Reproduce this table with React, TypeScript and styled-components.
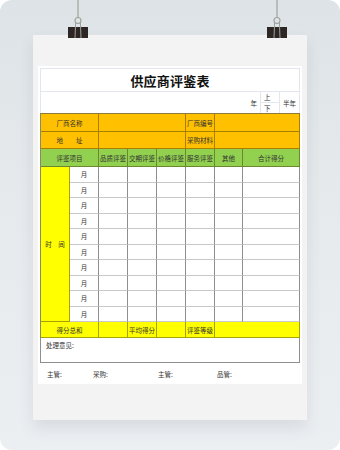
import React from "react";
import styled, { createGlobalStyle } from "styled-components";

const Global = createGlobalStyle`
  html, body { margin: 0; padding: 0; background: #ffffff; }
  body { font-family: "Noto Sans CJK SC", "Noto Sans", sans-serif; }
  * { box-sizing: border-box; }
`;

const Frame = styled.div`
  position: relative;
  width: 340px;
  height: 450px;
  border-radius: 12px;
  overflow: hidden;
  background: linear-gradient(180deg, #dde3e6 0%, #e6eaed 45%, #eceff2 100%);
  padding: 35px 0 0 33px;
`;

const ClipSvg = styled.svg<{ $left: number }>`
  position: absolute;
  top: 0;
  left: ${(p) => p.$left}px;
  width: 24px;
  height: 40px;
  z-index: 2;
`;

const Paper = styled.div`
  width: 274px;
  height: 385px;
  background: #f3f3f3;
  box-shadow: 0 8px 14px rgba(70, 80, 95, 0.12);
  padding: 31px 5px 0 5px;
`;

const Sheet = styled.div`
  width: 264px;
  height: 318px;
  background: #ffffff;
  padding: 2px 2px 0 2px;
  display: flex;
  flex-direction: column;
`;

const TitleBox = styled.div`
  height: 24px;
  border: 1px solid #e3e6ed;
  display: flex;
  align-items: center;
  justify-content: center;
  font-size: 13px;
  font-weight: 700;
  color: #111;
  letter-spacing: 0.2px;
`;

const DateRow = styled.div`
  height: 21px;
  border-left: 1px solid #e3e6ed;
  border-right: 1px solid #e3e6ed;
  display: flex;
  justify-content: flex-end;
  align-items: center;
  font-size: 6.5px;
  color: #333;
`;

const DateText = styled.span<{ $w?: number }>`
  width: ${(p) => (p.$w ? `${p.$w}px` : "auto")};
  text-align: center;
  margin-right: ${(p) => (p.$w ? 0 : 3)}px;
`;

const HalfBox = styled.div`
  width: 20px;
  height: 100%;
  border-left: 1px solid #e3e6ed;
  border-right: 1px solid #e3e6ed;
  display: flex;
  flex-direction: column;
`;

const HalfCell = styled.div<{ $top?: boolean }>`
  flex: 1;
  display: flex;
  align-items: center;
  padding-left: 3px;
  border-bottom: ${(p) => (p.$top ? "1px solid #e3e6ed" : "none")};
`;

const Grid = styled.div`
  display: grid;
  grid-template-columns: 29px 29px 29px 29px 29px 29px 28px 57px;
  grid-template-rows: 18px 17px 18px repeat(10, 15.5px) 16px;
  border-top: 1px solid #8a7a40;
  border-left: 1px solid #8a8a60;
  width: 260px;
`;

type Tone = "orange" | "green" | "yellow" | "white";

const toneBg: Record<Tone, string> = {
  orange: "#ffc000",
  green: "#92d050",
  yellow: "#ffff00",
  white: "#ffffff",
};

const Cell = styled.div<{ $tone: Tone; $span?: number; $rows?: number; $light?: boolean }>`
  grid-column: span ${(p) => p.$span || 1};
  grid-row: span ${(p) => p.$rows || 1};
  background: ${(p) => toneBg[p.$tone]};
  border-right: 1px solid
    ${(p) => (p.$tone === "white" ? "#8e8e8e" : "rgba(60, 50, 0, 0.45)")};
  border-bottom: 1px solid
    ${(p) => (p.$light ? "#c9c9c9" : p.$tone === "white" ? "#c9c9c9" : "rgba(60, 50, 0, 0.45)")};
  display: flex;
  align-items: center;
  justify-content: center;
  font-size: 6.5px;
  color: #333;
  white-space: nowrap;
  overflow: hidden;
`;

const Remark = styled.div`
  width: 260px;
  height: 25px;
  border-left: 1px solid #8e8e8e;
  border-right: 1px solid #8e8e8e;
  border-bottom: 1px solid #8e8e8e;
  padding: 2px 0 0 5px;
  font-size: 6.5px;
  color: #333;
`;

const SignRow = styled.div`
  height: 21px;
  display: flex;
  align-items: center;
  padding-left: 7px;
  font-size: 6.5px;
  color: #333;
`;

const Sign = styled.span<{ $w: number }>`
  width: ${(p) => p.$w}px;
`;

const Clip = ({ left }: { left: number }) => (
  <ClipSvg $left={left} viewBox="0 0 24 40">
    <line x1="12" y1="0" x2="12" y2="17.5" stroke="#9ea39a" strokeWidth="1.2" />
    <ellipse cx="12" cy="20.5" rx="3" ry="3" fill="none" stroke="#9ea39a" strokeWidth="1.1" />
    <rect x="2" y="27" width="20" height="11" fill="#2e2525" />
    <line x1="9.6" y1="22.5" x2="9" y2="38" stroke="#9ea39a" strokeWidth="1" />
    <line x1="14.4" y1="22.5" x2="15" y2="38" stroke="#9ea39a" strokeWidth="1" />
  </ClipSvg>
);

const headers = ["品质评鉴", "交期评鉴", "价格评鉴", "服务评鉴", "其他"];

export default function App() {
  const months = Array.from({ length: 10 });
  return (
    <>
      <Global />
      <Frame>
        <Clip left={66} />
        <Clip left={265} />
        <Paper>
          <Sheet>
            <TitleBox>供应商评鉴表</TitleBox>
            <DateRow>
              <DateText>年</DateText>
              <HalfBox>
                <HalfCell $top>上</HalfCell>
                <HalfCell>下</HalfCell>
              </HalfBox>
              <DateText $w={19}>半年</DateText>
            </DateRow>
            <Grid>
              <Cell $tone="orange" $span={2}>厂商名称</Cell>
              <Cell $tone="orange" $span={3} />
              <Cell $tone="orange">厂商编号</Cell>
              <Cell $tone="orange" $span={2} />

              <Cell $tone="orange" $span={2}>地　　址</Cell>
              <Cell $tone="orange" $span={3} />
              <Cell $tone="orange">采购材料</Cell>
              <Cell $tone="orange" $span={2} />

              <Cell $tone="green" $span={2}>评鉴项目</Cell>
              {headers.map((h) => (
                <Cell key={h} $tone="green">{h}</Cell>
              ))}
              <Cell $tone="green">合计得分</Cell>

              <Cell $tone="yellow" $rows={10}>时　间</Cell>
              {months.map((_, i) => (
                <React.Fragment key={i}>
                  <Cell $tone="white">月</Cell>
                  {Array.from({ length: 6 }).map((__, j) => (
                    <Cell key={j} $tone="white" />
                  ))}
                </React.Fragment>
              ))}

              <Cell $tone="yellow" $span={2}>得分总和</Cell>
              <Cell $tone="yellow" />
              <Cell $tone="yellow">平均得分</Cell>
              <Cell $tone="yellow" />
              <Cell $tone="yellow">评鉴等级</Cell>
              <Cell $tone="yellow" $span={2} />
            </Grid>
            <Remark>处理意见:</Remark>
            <SignRow>
              <Sign $w={46}>主管:</Sign>
              <Sign $w={65}>采购:</Sign>
              <Sign $w={59}>主管:</Sign>
              <Sign $w={40}>品管:</Sign>
            </SignRow>
          </Sheet>
        </Paper>
      </Frame>
    </>
  );
}
